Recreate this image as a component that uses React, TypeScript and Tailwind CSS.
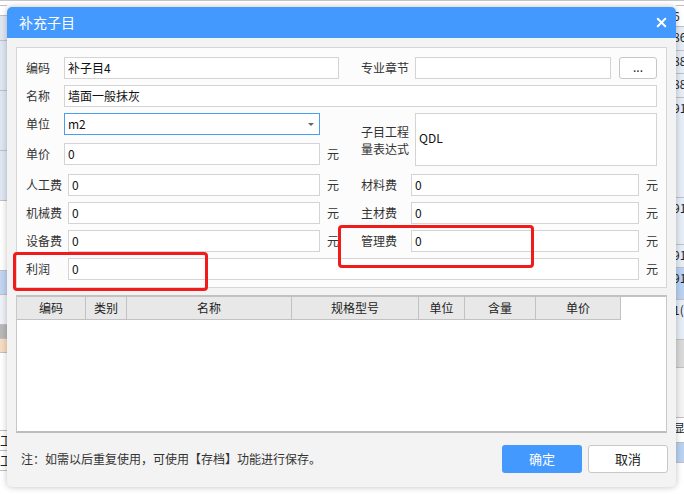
import { X } from 'lucide-react'

const font = 'font-["Noto_Sans_CJK_SC","Noto_Sans",sans-serif]'

function Field({ label, labelW, value, inputW, unit }: { label: string; labelW: string; value: string; inputW: string; unit?: boolean }) {
  return (
    <div className="flex items-center h-[22px]">
      <span className={`${labelW} text-[12px] text-[#333] leading-none`}>{label}</span>
      <div className={`${inputW} h-[22px] border border-[#d4d4d4] bg-white flex items-center pl-[3px] text-[12px] text-[#111]`}>{value}</div>
      {unit && <span className="ml-[7px] text-[12px] text-[#333] leading-none">元</span>}
    </div>
  )
}

const headers = [
  { t: '编码', w: 'w-[69px]' },
  { t: '类别', w: 'w-[41px]' },
  { t: '名称', w: 'w-[165px]' },
  { t: '规格型号', w: 'w-[127px]' },
  { t: '单位', w: 'w-[46px]' },
  { t: '含量', w: 'w-[71px]' },
  { t: '单价', w: 'w-[85px]' },
]

const rightCells = [
  { h: 'h-[5px]', bg: 'bg-white', t: '' },
  { h: 'h-[21px]', bg: 'bg-white', t: '6' },
  { h: 'h-[24px]', bg: 'bg-[#e6edf7]', t: '86' },
  { h: 'h-[23px]', bg: 'bg-[#e6edf7]', t: '88' },
  { h: 'h-[24px]', bg: 'bg-[#e6edf7]', t: '88' },
  { h: 'h-[100px]', bg: 'bg-[#e6edf7]', t: '91' },
  { h: 'h-[47px]', bg: 'bg-[#e6edf7]', t: '91' },
  { h: 'h-[23px]', bg: 'bg-[#e6edf7]', t: '91' },
  { h: 'h-[32px]', bg: 'bg-[#b9d2f2]', t: '91' },
  { h: 'h-[40px]', bg: 'bg-[#e6edf7]', t: '1(' },
  { h: 'h-[28px]', bg: 'bg-[#d9d9d9]', t: '' },
  { h: 'h-[50px]', bg: 'bg-[#f4f4f4]', t: '' },
  { h: 'h-[25px]', bg: 'bg-white', t: '显' },
  { h: 'h-[20px]', bg: 'bg-[#b9d2f2]', t: '' },
  { h: 'h-[40px]', bg: 'bg-white', t: '' },
]

const leftCells = [
  { h: 'h-[5px]', bg: 'bg-white' },
  { h: 'h-[10px]', bg: 'bg-white' },
  { h: 'h-[25px]', bg: 'bg-[#dfe7f3]' },
  { h: 'h-[50px]', bg: 'bg-[#dfe7f3]' },
  { h: 'h-[60px]', bg: 'bg-[#dfe7f3]' },
  { h: 'h-[50px]', bg: 'bg-[#dfe7f3]' },
  { h: 'h-[70px]', bg: 'bg-white' },
  { h: 'h-[24px]', bg: 'bg-[#c2d6f1]' },
  { h: 'h-[30px]', bg: 'bg-[#eef2f8]' },
  { h: 'h-[14px]', bg: 'bg-[#b8b8b8]' },
  { h: 'h-[14px]', bg: 'bg-[#f6ddc1]' },
  { h: 'h-[78px]', bg: 'bg-white' },
  { h: 'h-[20px]', bg: 'bg-white', t: '工' },
  { h: 'h-[20px]', bg: 'bg-white', t: '工' },
  { h: 'h-[24px]', bg: 'bg-white' },
]

export default function App() {
  return (
    <div className={`relative w-[684px] h-[494px] overflow-hidden bg-white ${font}`}>
      {/* spreadsheet behind the dialog */}
      <div className="flex flex-col h-full">
        <div className="flex h-[5px] border-b border-[#c6c6c6]">
          <div className="w-[10px] border-r border-[#c6c6c6]" />
          <div className="w-[172px] border-r border-[#c6c6c6]" />
          <div className="w-[123px] border-r border-[#c6c6c6]" />
          <div className="w-[35px] border-r border-[#c6c6c6]" />
          <div className="w-[66px] border-r border-[#c6c6c6]" />
          <div className="w-[54px] border-r border-[#c6c6c6]" />
        </div>
        <div className="flex flex-1">
          <div className="w-[7px] flex flex-col overflow-hidden">
            {leftCells.map((c, i) => (
              <div key={i} className={`${c.h} ${c.bg} shrink-0 border-b border-[#c0c0c0] text-[12px] leading-[20px] text-[#222] overflow-hidden`}>
                {'t' in c ? c.t : ''}
              </div>
            ))}
          </div>
          <div className="flex-1" />
          <div className="w-[8px] flex flex-col overflow-hidden">
            {rightCells.map((c, i) => (
              <div key={i} className={`${c.h} ${c.bg} shrink-0 border-b border-[#c0c0c0] text-[12px] leading-[20px] text-[#222] overflow-hidden whitespace-nowrap pl-[1px]`}>
                <span className="-ml-[4px]">{c.t}</span>
              </div>
            ))}
          </div>
        </div>
      </div>

      {/* dialog */}
      <div className="absolute left-[7px] top-[7px] w-[669px] h-[480px] rounded-[5px] bg-[#f3f3f3] shadow-[0_0_6px_rgba(0,0,0,0.25)] flex flex-col overflow-hidden">
        <div className="h-[31px] bg-[#4499fe] flex items-center justify-between pl-[12px] pr-[7px]">
          <span className="text-[14px] text-white">补充子目</span>
          <X size={15} strokeWidth={3.2} className="text-white" />
        </div>

        <div className="flex flex-col px-[9px] pt-[9px]">
          {/* form panel */}
          <div className="h-[241px] border border-[#d6d6d6] bg-[#fcfcfc] pl-[9px] pt-[9px] flex flex-col">
            <div className="flex items-center h-[22px]">
              <div className="w-[313px]">
                <Field label="编码" labelW="w-[38px]" value="补子目4" inputW="w-[275px]" />
              </div>
              <div className="ml-[22px] flex items-center h-[22px]">
                <span className="w-[54px] text-[12px] text-[#333] leading-none">专业章节</span>
                <div className="w-[196px] h-[22px] border border-[#d4d4d4] bg-white" />
                <div className="ml-[8px] w-[38px] h-[22px] border border-[#c6c6c6] rounded-[3px] bg-white flex items-center justify-center text-[12px] text-[#222] leading-none pb-[2px]">...</div>
              </div>
            </div>

            <div className="mt-[6px]">
              <Field label="名称" labelW="w-[38px]" value="墙面一般抹灰" inputW="w-[593px]" />
            </div>

            <div className="mt-[6px] flex">
              <div className="w-[313px] flex flex-col">
                <div className="flex items-center h-[22px]">
                  <span className="w-[38px] text-[12px] text-[#333] leading-none">单位</span>
                  <div className="w-[256px] h-[22px] border border-[#4a9df5] bg-white flex items-center justify-between pl-[3px] pr-[5px] text-[12px] text-[#111]">
                    <span>m2</span>
                    <svg width="6" height="3" viewBox="0 0 6 3"><path d="M0 0h6L3 3z" fill="#666" /></svg>
                  </div>
                </div>
                <div className="mt-[8px]">
                  <Field label="单价" labelW="w-[38px]" value="0" inputW="w-[256px]" unit />
                </div>
              </div>
              <div className="ml-[22px] flex">
                <div className="w-[54px] flex flex-col justify-center text-[12px] text-[#333] leading-[17px]">
                  <span>子目工程</span>
                  <span>量表达式</span>
                </div>
                <div className="w-[242px] h-[53px] border border-[#d4d4d4] bg-white pl-[3px] pt-[18px] text-[12px] text-[#111] leading-none">QDL</div>
              </div>
            </div>

            {[
              ['人工费', '材料费'],
              ['机械费', '主材费'],
              ['设备费', '管理费'],
            ].map(([l, r], i) => (
              <div key={l} className={`flex ${i === 0 ? 'mt-[8px]' : 'mt-[6px]'}`}>
                <div className="w-[313px]">
                  <Field label={l} labelW="w-[42px]" value="0" inputW="w-[252px]" unit />
                </div>
                <div className="ml-[22px]">
                  <Field label={r} labelW="w-[50px]" value="0" inputW="w-[228px]" unit />
                </div>
              </div>
            ))}

            <div className="mt-[6px]">
              <Field label="利润" labelW="w-[42px]" value="0" inputW="w-[571px]" unit />
            </div>
          </div>

          {/* table */}
          <div className="mt-[7px] h-[138px] border-t-2 border-b-2 border-x border-t-[#c2c2c2] border-b-[#bdbdbd] border-x-[#c8c8c8] bg-white flex flex-col">
            <div className="flex h-[23px]">
              {headers.map(h => (
                <div key={h.t} className={`${h.w} h-full bg-[#e8e8e8] border-r border-b border-[#c2c2c2] flex items-center justify-center text-[12px] text-[#222]`}>
                  {h.t}
                </div>
              ))}
            </div>
          </div>
        </div>

        {/* footer */}
        <div className="flex-1 flex items-center justify-between pl-[14px] pr-[8px] pb-[2px]">
          <span className="text-[12px] text-[#333]">注：如需以后重复使用，可使用【存档】功能进行保存。</span>
          <div className="flex gap-[6px]">
            <button className="w-[80px] h-[28px] rounded-[3px] bg-[#4499fe] text-white text-[13px]">确定</button>
            <button className="w-[80px] h-[28px] rounded-[3px] bg-white border border-[#c8c8c8] text-[#222] text-[13px]">取消</button>
          </div>
        </div>
      </div>

      {/* highlight boxes */}
      <div className="absolute left-[13px] top-[252px] w-[195px] h-[39px] border-[3px] border-[#f01c1c] rounded-[4px]" />
      <div className="absolute left-[338px] top-[225px] w-[196px] h-[43px] border-[3px] border-[#f01c1c] rounded-[4px]" />
    </div>
  )
}
